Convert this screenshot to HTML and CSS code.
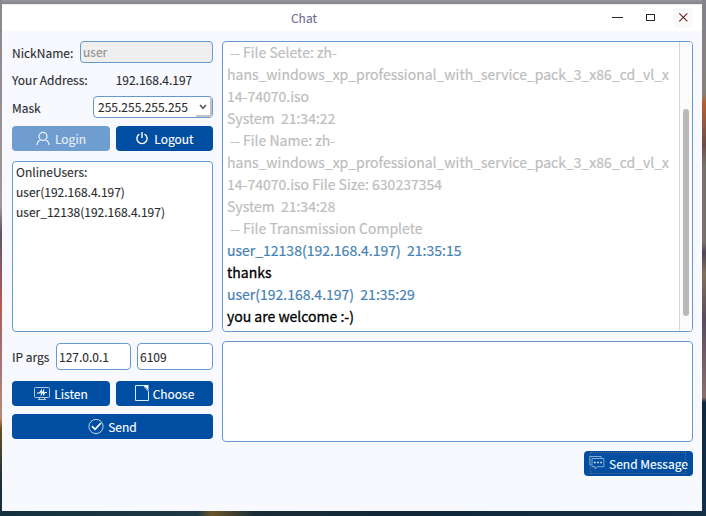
FILE: index.html
```html
<!DOCTYPE html>
<html lang="en">
<head>
<meta charset="utf-8">
<title>Chat</title>
<link rel="stylesheet" href="styles.css">
</head>
<body>
<div class="desktop">
<main class="window">
  <header class="titlebar">
    <h1 class="title">Chat</h1>
    <div class="controls">
      <svg class="ctl" width="19" height="19" viewBox="0 0 19 19"><path d="M4 9.5h11" stroke="#29292d"/></svg>
      <svg class="ctl" width="19" height="19" viewBox="0 0 19 19"><rect x="5.5" y="6.5" width="8" height="6" fill="none" stroke="#29292d"/></svg>
      <svg class="ctl close" width="19" height="19" viewBox="0 0 19 19"><path d="M5.3 5.3l8 8M13.3 5.3l-8 8" stroke="#6a2020" stroke-width="1.1"/></svg>
    </div>
  </header>
  <div class="content">
    <section class="side">
      <div class="row nick"><span class="label">NickName:</span><div class="field disabled">user</div></div>
      <div class="row address"><span class="label">Your Address:</span><span class="ip">192.168.4.197</span></div>
      <div class="row mask"><span class="label">Mask</span>
        <div class="select">255.255.255.255<span class="arrow"><svg width="8" height="6" viewBox="0 0 8 6"><path d="M1 1l3 3.4L7 1" fill="none" stroke="#505963" stroke-width="1.6"/></svg></span></div>
      </div>
      <div class="row pair auth">
        <button class="btn off"><svg width="14" height="16" viewBox="0 0 14 16" fill="none" stroke="#fff" stroke-width="1.1"><circle cx="7" cy="5.4" r="4"/><path d="M4.5 9C2.5 9.6 1.3 11 1 14M9.500 9c2 .6 3.200 2 3.500 5"/></svg><span>Login</span></button>
        <button class="btn logout"><svg width="14" height="16" viewBox="0 0 14 16" fill="none" stroke="#fff" stroke-width="1.4"><path d="M4.400 3.100a5.100 5.100 0 1 0 5.200 0M7 1v6"/></svg><span>Logout</span></button>
      </div>
      <div class="users"><div>OnlineUsers:</div><div>user(192.168.4.197)</div><div>user_12138(192.168.4.197)</div></div>
      <div class="row args"><span class="label">IP args</span><div class="field host">127.0.0.1</div><div class="field port">6109</div></div>
      <div class="row pair files">
        <button class="btn listen"><svg width="16" height="16" viewBox="0 0 16 16" fill="none" stroke="#b5cae2"><rect x=".5" y="1.500" width="15" height="10" rx="1"/><path d="M4 13.500h8M5.500 12v1M10.500 12v1"/><path d="M3 7h2.500l1.800-2.500v4l2.300-4v4L11 6.500h2" stroke="#fff" stroke-width="1.100"/></svg><span>Listen</span></button>
        <button class="btn choose"><svg width="14" height="17" viewBox="0 0 14 17" fill="none" stroke="#e0eaf5"><path d="M8.500 .5H.5v15h13V6.500L8.500 .5"/><path d="M8 0h5.500v5.500l-2-2.500z" fill="#fff" stroke="none"/></svg><span>Choose</span></button>
      </div>
      <button class="btn send"><svg width="16" height="16" viewBox="0 0 16 16" fill="none"><circle cx="8" cy="7.500" r="7.100" stroke="#c3d5e9"/><path d="M4 7.200l3 3.100 6-6.300" stroke="#fff" stroke-width="1.700"/></svg><span>Send</span></button>
    </section>
    <section class="talk">
      <div class="history">
        <div class="messages">
          <p class="sys"> -- File Selete: zh-
hans_windows_xp_professional_with_service_pack_3_x86_cd_vl_x
14-74070.iso
System  21:34:22
 -- File Name: zh-
hans_windows_xp_professional_with_service_pack_3_x86_cd_vl_x
14-74070.iso File Size: 630237354
System  21:34:28
 -- File Transmission Complete</p>
          <p class="who">user_12138(192.168.4.197)  21:35:15</p>
          <p class="said">thanks</p>
          <p class="who">user(192.168.4.197)  21:35:29</p>
          <p class="said">you are welcome :-)</p>
        </div>
        <div class="scrollbar"><div class="thumb"></div></div>
      </div>
      <div class="compose"></div>
      <button class="btn message"><svg width="16" height="16" viewBox="0 0 16 16" fill="none" stroke="#84a9d3"><path d="M2.500 9H.8V.5h11.400v1.800M3 2.500h11.900v8.200H8.200L6 13v-2.300H3z"/><path d="M5 6.500h1.500M8.200 6.500h1.500M11.400 6.500h1.500" stroke="#fff" stroke-width="1.300"/></svg><span>Send Message</span></button>
    </section>
  </div>
</main>
</div>
</body>
</html>
```
FILE: styles.css
```css
* { box-sizing: border-box; }
body {
  margin: 0;
  font-family: "Noto Sans CJK SC", "Noto Sans", sans-serif;
  font-size: 12px;
  color: #2b2c2e;
  -webkit-text-stroke: 0.12px;
}
.desktop {
  width: 706px;
  height: 516px;
  padding: 4px 4px 5px 2px;
  background:
    linear-gradient(90deg, #15313f, #1f3844 28%, #6b5428 30%, #1a2c36 36%, #10283a 60%, #152f46) 0 100% / 100% 5px no-repeat,
    linear-gradient(#85838a 0 5%, #858178 18%, #b36033 20%, #6d4d4b 28%, #77716b 32% 47%, #504755 49%, #80705c 53%, #594c5f 62%, #89706e 77%, #10283d 78%, #10304d) 100% 0 / 4px 100% no-repeat,
    linear-gradient(#8b878d, #9f9895 40%, #615666 45%, #b25c50 59%, #a47478 70%, #bc8875 81%, #6b5020 83%, #162f3c 94%) 0 0 / 2px 100% no-repeat,
    linear-gradient(#96959d, #85838a) 0 0 / 100% 4px no-repeat;
}
.window { height: 507px; background: #f7f9ff; display: flex; flex-direction: column; }
.titlebar {
  height: 27px;
  flex: none;
  background: #fff;
  border-top: 1px solid #ececf0;
  border-radius: 2px 2px 0 0;
  display: grid;
  grid-template-columns: 606px 1fr;
}
.title { margin: 0; padding-right: 2px; text-align: center; font-size: 12px; font-weight: 400; line-height: 26px; color: #6c6f94; }
.controls { display: flex; gap: 14px; padding-top: 3px; }
.ctl { display: block; flex: none; }
.ctl.close { background: #f9f9f9; }
.content { display: grid; grid-template-columns: 201px 471px; gap: 9px; padding: 10px 9px 0 10px; }
.row { display: flex; align-items: center; }
.label { white-space: nowrap; }
.field, .select, .users, .history, .compose { background: #fff; border: 1px solid #6899ce; border-radius: 4px; }
.side { display: flex; flex-direction: column; }
.nick { height: 22px; justify-content: space-between; }
.nick .field { width: 133px; height: 22px; line-height: 20px; padding-left: 2px; }
.field.disabled { background: #efefef; color: #929292; }
.address { height: 33px; gap: 28px; }
.mask { height: 22px; justify-content: space-between; }
.select { width: 120px; height: 22px; line-height: 20px; padding-left: 4px; display: flex; justify-content: space-between; }
.arrow {
  width: 16px;
  height: 20px;
  display: flex;
  align-items: center;
  justify-content: center;
  padding-top: 2px;
  border: solid #c3c4c8;
  border-width: 0 2px 2px 0;
}
.pair { display: grid; grid-template-columns: 98px 97px; gap: 6px; }
.btn {
  height: 25px;
  padding: 0;
  border: 0;
  border-radius: 4px;
  background: #004ea1;
  color: #fff;
  font: inherit;
  line-height: 25px;
  display: flex;
  align-items: center;
  justify-content: center;
  gap: 4px;
}
.btn svg { flex: none; }
.btn span { white-space: nowrap; }
.btn.off { background: #709dd0; color: #e6eef7; }
.auth { margin-top: 8px; }
.auth .btn { gap: 5px; }
.users { height: 171px; margin-top: 10px; padding: 0 3px; line-height: 20px; }
.args { height: 27px; margin-top: 11px; }
.args .label { width: 44px; }
.args .field { height: 27px; line-height: 26px; padding-left: 2px; }
.host { width: 75px; margin-right: 6px; }
.port { width: 76px; }
.files { margin-top: 11px; }
.send { margin-top: 8px; }
.talk { display: flex; flex-direction: column; }
.history { height: 291px; display: flex; overflow: hidden; }
.messages { flex: 1; margin-top: -1px; padding-left: 4px; font-size: 14px; line-height: 22px; white-space: nowrap; -webkit-text-stroke: 0.2px; }
.messages p { margin: 0; white-space: pre; }
.sys { color: #bdbdbd; }
.who { color: #4682b4; }
.said { color: #000; -webkit-text-stroke: 0.3px; }
.scrollbar { flex: none; width: 13px; border-left: 1px solid #d8d8d8; background: #fbfbfb; padding: 67px 3px 0; }
.thumb { width: 6px; height: 207px; border-radius: 3px; background: #b8b8bd; }
.compose { height: 101px; margin-top: 9px; }
.message { width: 109px; margin-top: 9px; align-self: flex-end; position: relative; }
.message::after { content: ""; position: absolute; inset: 1px 7px 2px 6px; border: 1px dotted #5d6b7c; }
```
